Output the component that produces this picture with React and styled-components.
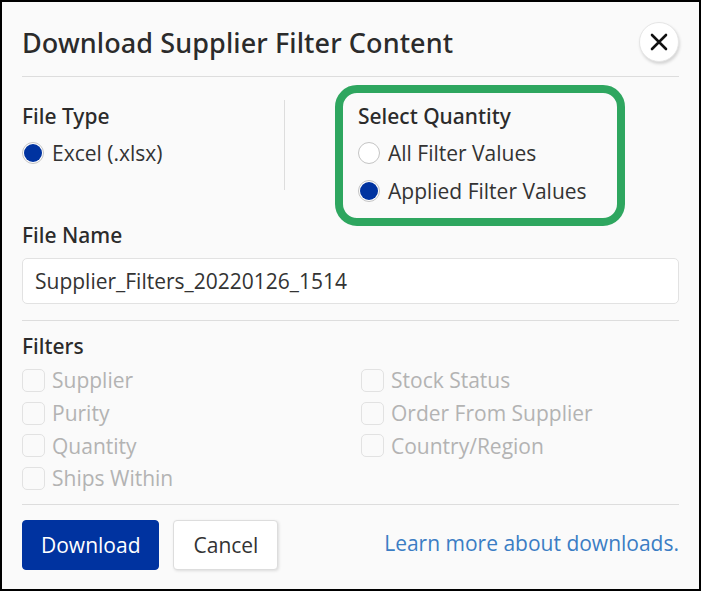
import React from 'react';
import styled, { createGlobalStyle } from 'styled-components';

const GlobalStyle = createGlobalStyle`
  html, body {
    margin: 0;
    padding: 0;
    background: #ffffff;
  }
  body {
    font-family: "Open Sans", "Noto Sans", Arial, sans-serif;
    color: #333333;
  }
  * {
    box-sizing: border-box;
  }
`;

const Dialog = styled.div`
  width: 701px;
  height: 591px;
  background: #fafafa;
  border: 2px solid #000000;
  padding: 0 20px;
  display: flex;
  flex-direction: column;
`;

const Header = styled.div`
  display: flex;
  align-items: center;
  justify-content: space-between;
  height: 75px;
  padding-top: 6px;
  border-bottom: 1px solid #dddddd;
`;

const Title = styled.h1`
  margin: 0;
  font-family: "Noto Sans", "Open Sans", Arial, sans-serif;
  font-size: 27px;
  font-weight: 500;
  letter-spacing: 0.1px;
  color: #2b2b2b;
`;

const CloseButton = styled.button`
  width: 40px;
  height: 40px;
  border-radius: 50%;
  border: 1px solid #e6e6e6;
  background: #ffffff;
  box-shadow: 1px 2px 3px rgba(0, 0, 0, 0.15);
  display: flex;
  align-items: center;
  justify-content: center;
  padding: 0;
  cursor: pointer;
`;

const TopRow = styled.div`
  display: grid;
  grid-template-columns: 262px 1px 1fr;
  margin-top: 21px;
`;

const Column = styled.div`
  display: flex;
  flex-direction: column;
`;

const VDivider = styled.div`
  background: #dddddd;
  width: 1px;
  height: 90px;
  margin-top: 2px;
`;

const Highlight = styled.div`
  margin: -13px 0 -16px 50px;
  width: 290px;
  padding: 5px 0 8px 15px;
  border: 8px solid #2ea65f;
  border-radius: 22px;
`;

const Label = styled.div`
  font-family: "Noto Sans", "Open Sans", Arial, sans-serif;
  font-size: 21px;
  font-weight: 500;
  line-height: 36px;
  color: #2b2b2b;
`;

const OptionRow = styled.label`
  display: flex;
  align-items: center;
  gap: 7px;
  font-size: 21px;
  height: ${(p) => (p.$tight ? '32.7px' : '38px')};
  color: ${(p) => (p.$disabled ? '#b3b3b3' : '#333333')};
`;

const Radio = styled.span`
  width: 22px;
  height: 22px;
  border-radius: 50%;
  border: 1px solid #c4c4c4;
  background: #ffffff;
  display: flex;
  align-items: center;
  justify-content: center;
  flex-shrink: 0;
  margin-right: 1px;
  &::after {
    content: '';
    width: 18px;
    height: 18px;
    border-radius: 50%;
    background: ${(p) => (p.$checked ? '#0033a0' : 'transparent')};
  }
`;

const Checkbox = styled.span`
  width: 23px;
  height: 23px;
  border-radius: 5px;
  border: 1px solid #e2e2e2;
  background: #fafafa;
  flex-shrink: 0;
`;

const Section = styled.div`
  margin-top: ${(p) => p.$top || '0px'};
`;

const TextInput = styled.input`
  display: block;
  width: 100%;
  height: 46px;
  margin-top: 5px;
  padding: 0 12px;
  font-family: inherit;
  font-size: 21px;
  color: #333333;
  background: #ffffff;
  border: 1px solid #e2e2e2;
  border-radius: 5px;
  outline: none;
`;

const HDivider = styled.div`
  height: 1px;
  flex-shrink: 0;
  background: #dddddd;
  margin-top: ${(p) => p.$top || '0px'};
`;

const FilterGrid = styled.div`
  display: grid;
  grid-template-columns: 339px 1fr;
  grid-auto-flow: column;
  grid-template-rows: repeat(4, 32.7px);
`;

const Footer = styled.div`
  display: flex;
  align-items: center;
  gap: 14px;
  margin-top: 15px;
`;

const Button = styled.button`
  height: 50px;
  padding: 0 ${(p) => (p.$primary ? '18px' : '19px')};
  font-family: inherit;
  font-size: 21px;
  border-radius: 4px;
  cursor: pointer;
  color: ${(p) => (p.$primary ? '#ffffff' : '#333333')};
  background: ${(p) => (p.$primary ? '#0033a0' : '#ffffff')};
  border: 1px solid ${(p) => (p.$primary ? '#0033a0' : '#dddddd')};
  box-shadow: ${(p) => (p.$primary ? 'none' : '1px 1px 3px rgba(0,0,0,0.12)')};
`;

const LearnLink = styled.a`
  margin-left: auto;
  font-size: 21px;
  color: #3b7dc4;
  text-decoration: none;
  margin-top: -4px;
`;

const leftFilters = ['Supplier', 'Purity', 'Quantity', 'Ships Within'];
const rightFilters = ['Stock Status', 'Order From Supplier', 'Country/Region'];

export default function App() {
  return (
    <>
      <GlobalStyle />
      <Dialog>
        <Header>
          <Title>Download Supplier Filter Content</Title>
          <CloseButton aria-label="Close">
            <svg width="18" height="18" viewBox="0 0 18 18">
              <path d="M2 2 L16 16 M16 2 L2 16" stroke="#111" strokeWidth="2.6" strokeLinecap="round" />
            </svg>
          </CloseButton>
        </Header>

        <TopRow>
          <Column>
            <Label>File Type</Label>
            <OptionRow>
              <Radio $checked />
              Excel (.xlsx)
            </OptionRow>
          </Column>
          <VDivider />
          <Highlight>
            <Label>Select Quantity</Label>
            <OptionRow>
              <Radio />
              All Filter Values
            </OptionRow>
            <OptionRow>
              <Radio $checked />
              Applied Filter Values
            </OptionRow>
          </Highlight>
        </TopRow>

        <Section $top="7px">
          <Label>File Name</Label>
          <TextInput defaultValue="Supplier_Filters_20220126_1514" />
        </Section>

        <HDivider $top="16px" />

        <Section $top="7px">
          <Label>Filters</Label>
          <FilterGrid>
            {leftFilters.map((f) => (
              <OptionRow key={f} $tight $disabled>
                <Checkbox />
                {f}
              </OptionRow>
            ))}
            {rightFilters.map((f) => (
              <OptionRow key={f} $tight $disabled>
                <Checkbox />
                {f}
              </OptionRow>
            ))}
          </FilterGrid>
        </Section>

        <HDivider $top="9px" />

        <Footer>
          <Button $primary>Download</Button>
          <Button>Cancel</Button>
          <LearnLink href="#">Learn more about downloads.</LearnLink>
        </Footer>
      </Dialog>
    </>
  );
}
